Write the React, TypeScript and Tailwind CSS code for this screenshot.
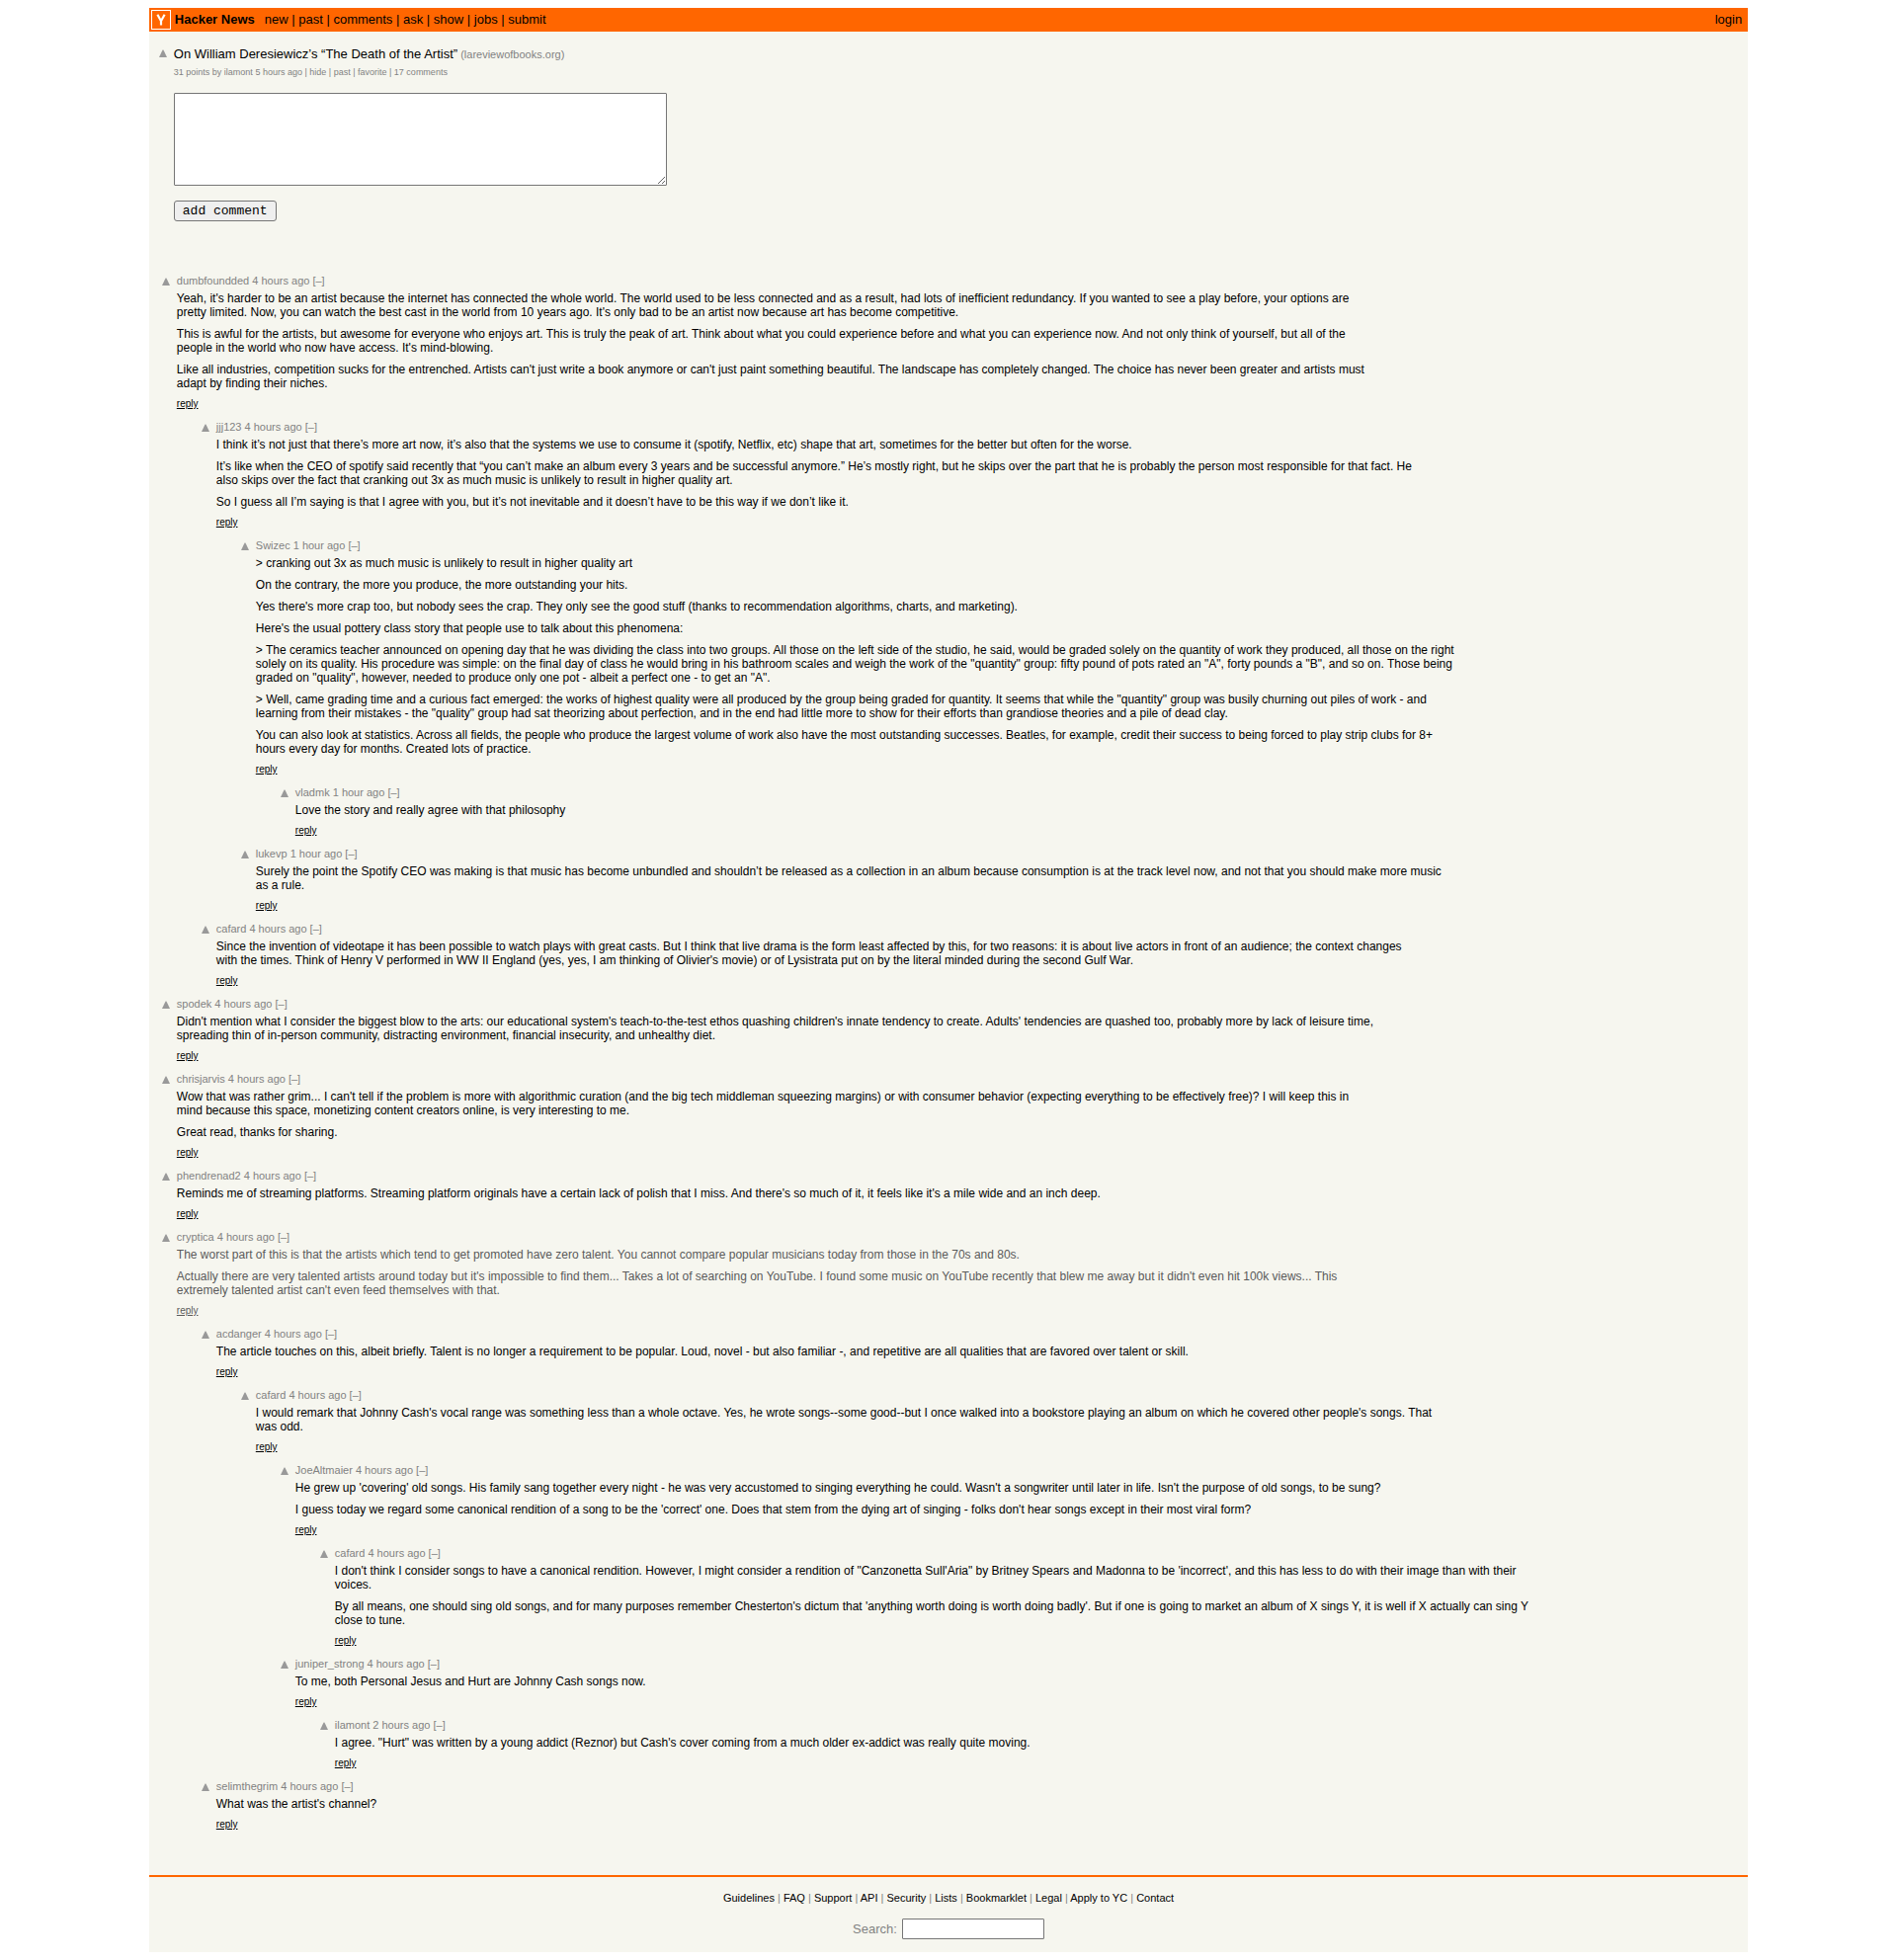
import React from "react";

type CommentData = {
  user: string;
  age: string;
  paragraphs: string[];
  faded?: boolean;
  replies?: CommentData[];
};

const navLinks = ["new", "past", "comments", "ask", "show", "jobs", "submit"];

const storyLinks = ["hide", "past", "favorite", "17 comments"];

const footerLinks = [
  "Guidelines",
  "FAQ",
  "Support",
  "API",
  "Security",
  "Lists",
  "Bookmarklet",
  "Legal",
  "Apply to YC",
  "Contact",
];

const comments: CommentData[] = [
  {
    user: "dumbfoundded",
    age: "4 hours ago",
    paragraphs: [
      "Yeah, it's harder to be an artist because the internet has connected the whole world. The world used to be less connected and as a result, had lots of inefficient redundancy. If you wanted to see a play before, your options are pretty limited. Now, you can watch the best cast in the world from 10 years ago. It's only bad to be an artist now because art has become competitive.",
      "This is awful for the artists, but awesome for everyone who enjoys art. This is truly the peak of art. Think about what you could experience before and what you can experience now. And not only think of yourself, but all of the people in the world who now have access. It's mind-blowing.",
      "Like all industries, competition sucks for the entrenched. Artists can't just write a book anymore or can't just paint something beautiful. The landscape has completely changed. The choice has never been greater and artists must adapt by finding their niches.",
    ],
    replies: [
      {
        user: "jjj123",
        age: "4 hours ago",
        paragraphs: [
          "I think it’s not just that there’s more art now, it’s also that the systems we use to consume it (spotify, Netflix, etc) shape that art, sometimes for the better but often for the worse.",
          "It’s like when the CEO of spotify said recently that “you can’t make an album every 3 years and be successful anymore.” He’s mostly right, but he skips over the part that he is probably the person most responsible for that fact. He also skips over the fact that cranking out 3x as much music is unlikely to result in higher quality art.",
          "So I guess all I’m saying is that I agree with you, but it’s not inevitable and it doesn’t have to be this way if we don’t like it.",
        ],
        replies: [
          {
            user: "Swizec",
            age: "1 hour ago",
            paragraphs: [
              "> cranking out 3x as much music is unlikely to result in higher quality art",
              "On the contrary, the more you produce, the more outstanding your hits.",
              "Yes there's more crap too, but nobody sees the crap. They only see the good stuff (thanks to recommendation algorithms, charts, and marketing).",
              "Here's the usual pottery class story that people use to talk about this phenomena:",
              "> The ceramics teacher announced on opening day that he was dividing the class into two groups. All those on the left side of the studio, he said, would be graded solely on the quantity of work they produced, all those on the right solely on its quality. His procedure was simple: on the final day of class he would bring in his bathroom scales and weigh the work of the \"quantity\" group: fifty pound of pots rated an \"A\", forty pounds a \"B\", and so on. Those being graded on \"quality\", however, needed to produce only one pot - albeit a perfect one - to get an \"A\".",
              "> Well, came grading time and a curious fact emerged: the works of highest quality were all produced by the group being graded for quantity. It seems that while the \"quantity\" group was busily churning out piles of work - and learning from their mistakes - the \"quality\" group had sat theorizing about perfection, and in the end had little more to show for their efforts than grandiose theories and a pile of dead clay.",
              "You can also look at statistics. Across all fields, the people who produce the largest volume of work also have the most outstanding successes. Beatles, for example, credit their success to being forced to play strip clubs for 8+ hours every day for months. Created lots of practice.",
            ],
            replies: [
              {
                user: "vladmk",
                age: "1 hour ago",
                paragraphs: ["Love the story and really agree with that philosophy"],
              },
            ],
          },
          {
            user: "lukevp",
            age: "1 hour ago",
            paragraphs: [
              "Surely the point the Spotify CEO was making is that music has become unbundled and shouldn’t be released as a collection in an album because consumption is at the track level now, and not that you should make more music as a rule.",
            ],
          },
        ],
      },
      {
        user: "cafard",
        age: "4 hours ago",
        paragraphs: [
          "Since the invention of videotape it has been possible to watch plays with great casts. But I think that live drama is the form least affected by this, for two reasons: it is about live actors in front of an audience; the context changes with the times. Think of Henry V performed in WW II England (yes, yes, I am thinking of Olivier's movie) or of Lysistrata put on by the literal minded during the second Gulf War.",
        ],
      },
    ],
  },
  {
    user: "spodek",
    age: "4 hours ago",
    paragraphs: [
      "Didn't mention what I consider the biggest blow to the arts: our educational system's teach-to-the-test ethos quashing children's innate tendency to create. Adults' tendencies are quashed too, probably more by lack of leisure time, spreading thin of in-person community, distracting environment, financial insecurity, and unhealthy diet.",
    ],
  },
  {
    user: "chrisjarvis",
    age: "4 hours ago",
    paragraphs: [
      "Wow that was rather grim... I can't tell if the problem is more with algorithmic curation (and the big tech middleman squeezing margins) or with consumer behavior (expecting everything to be effectively free)? I will keep this in mind because this space, monetizing content creators online, is very interesting to me.",
      "Great read, thanks for sharing.",
    ],
  },
  {
    user: "phendrenad2",
    age: "4 hours ago",
    paragraphs: [
      "Reminds me of streaming platforms. Streaming platform originals have a certain lack of polish that I miss. And there's so much of it, it feels like it's a mile wide and an inch deep.",
    ],
  },
  {
    user: "cryptica",
    age: "4 hours ago",
    faded: true,
    paragraphs: [
      "The worst part of this is that the artists which tend to get promoted have zero talent. You cannot compare popular musicians today from those in the 70s and 80s.",
      "Actually there are very talented artists around today but it's impossible to find them... Takes a lot of searching on YouTube. I found some music on YouTube recently that blew me away but it didn't even hit 100k views... This extremely talented artist can't even feed themselves with that.",
    ],
    replies: [
      {
        user: "acdanger",
        age: "4 hours ago",
        paragraphs: [
          "The article touches on this, albeit briefly. Talent is no longer a requirement to be popular. Loud, novel - but also familiar -, and repetitive are all qualities that are favored over talent or skill.",
        ],
        replies: [
          {
            user: "cafard",
            age: "4 hours ago",
            paragraphs: [
              "I would remark that Johnny Cash's vocal range was something less than a whole octave. Yes, he wrote songs--some good--but I once walked into a bookstore playing an album on which he covered other people's songs. That was odd.",
            ],
            replies: [
              {
                user: "JoeAltmaier",
                age: "4 hours ago",
                paragraphs: [
                  "He grew up 'covering' old songs. His family sang together every night - he was very accustomed to singing everything he could. Wasn't a songwriter until later in life. Isn't the purpose of old songs, to be sung?",
                  "I guess today we regard some canonical rendition of a song to be the 'correct' one. Does that stem from the dying art of singing - folks don't hear songs except in their most viral form?",
                ],
                replies: [
                  {
                    user: "cafard",
                    age: "4 hours ago",
                    paragraphs: [
                      "I don't think I consider songs to have a canonical rendition. However, I might consider a rendition of \"Canzonetta Sull'Aria\" by Britney Spears and Madonna to be 'incorrect', and this has less to do with their image than with their voices.",
                      "By all means, one should sing old songs, and for many purposes remember Chesterton's dictum that 'anything worth doing is worth doing badly'. But if one is going to market an album of X sings Y, it is well if X actually can sing Y close to tune.",
                    ],
                  },
                ],
              },
              {
                user: "juniper_strong",
                age: "4 hours ago",
                paragraphs: ["To me, both Personal Jesus and Hurt are Johnny Cash songs now."],
                replies: [
                  {
                    user: "ilamont",
                    age: "2 hours ago",
                    paragraphs: [
                      "I agree. \"Hurt\" was written by a young addict (Reznor) but Cash's cover coming from a much older ex-addict was really quite moving.",
                    ],
                  },
                ],
              },
            ],
          },
        ],
      },
      {
        user: "selimthegrim",
        age: "4 hours ago",
        paragraphs: ["What was the artist's channel?"],
      },
    ],
  },
];

function Upvote() {
  return (
    <button type="button" aria-label="upvote" className="block size-2">
      <svg viewBox="0 0 8 8" className="block size-2" aria-hidden="true">
        <path d="M3.6 0.4H4.4L8 8H0Z" fill="#999999" />
      </svg>
    </button>
  );
}

function Piped({ items }: { items: string[] }) {
  return (
    <>
      {items.map((item, i) => (
        <React.Fragment key={item}>
          {i > 0 && " | "}
          <a href="#">{item}</a>
        </React.Fragment>
      ))}
    </>
  );
}

function Comment({ data }: { data: CommentData }) {
  return (
    <li>
      <article className="flex gap-[7px] pb-[10px]">
        <div className="pt-1">
          <Upvote />
        </div>
        <div className="min-w-0 flex-1">
          <div className="mb-1 text-[11px] leading-[14px] text-[#828282]">
            <a href="#">{data.user}</a> <a href="#">{data.age}</a>{" "}
            <button type="button">[–]</button>
          </div>
          <div
            className={
              data.faded
                ? "flex max-w-[1215px] flex-col gap-2 text-[12px] leading-[14px] text-[#5a5a5a]"
                : "flex max-w-[1215px] flex-col gap-2 text-[12px] leading-[14px] text-black"
            }
          >
            {data.paragraphs.map((p) => (
              <p key={p}>{p}</p>
            ))}
            <p className="text-[10px] leading-[12px]">
              <a href="#" className="underline">
                reply
              </a>
            </p>
          </div>
        </div>
      </article>
      {data.replies && <CommentList items={data.replies} nested />}
    </li>
  );
}

function CommentList({ items, nested }: { items: CommentData[]; nested?: boolean }) {
  return (
    <ul className={nested ? "pl-10" : ""}>
      {items.map((c) => (
        <Comment key={c.user + c.age} data={c} />
      ))}
    </ul>
  );
}

export default function App() {
  return (
    <div className="bg-white p-2 font-['Liberation_Sans',Arial,sans-serif] text-[13px] leading-4 text-[#828282]">
      <div className="mx-auto w-[85%] bg-[#f6f6ef]">
        <header className="flex items-center bg-[#ff6600] p-[2px] text-black">
          <a href="#" aria-label="Home" className="mr-1">
            <svg viewBox="0 0 20 20" className="block size-5" aria-hidden="true">
              <rect x="0.5" y="0.5" width="19" height="19" fill="#ff6600" stroke="#ffffff" />
              <path d="M6.4 4.8 10 11.2 13.6 4.8M10 10.6V15.4" fill="none" stroke="#ffffff" strokeWidth="2.2" />
            </svg>
          </a>
          <a href="#" className="mr-[10px] font-bold">
            Hacker News
          </a>
          <nav className="flex-1">
            <Piped items={navLinks} />
          </nav>
          <a href="#" className="mr-1">
            login
          </a>
        </header>

        <main>
          <section className="flex gap-[7px] pt-[15px] pl-[10px]">
            <div className="pt-[3px]">
              <Upvote />
            </div>
            <div className="min-w-0 flex-1">
              <h1>
                <a href="#" className="text-black">
                  On William Deresiewicz’s “The Death of the Artist”
                </a>
                <span className="text-[11px]">
                  {" "}
                  (<a href="#">lareviewofbooks.org</a>)
                </span>
              </h1>
              <p className="mt-1 text-[9px] leading-[12px]">
                31 points by <a href="#">ilamont</a> <a href="#">5 hours ago</a> |{" "}
                <Piped items={storyLinks} />
              </p>
              <form className="mt-[15px]" onSubmit={(e) => e.preventDefault()}>
                <textarea
                  aria-label="Comment text"
                  className="block h-[94px] w-[499px] max-w-full rounded-[1px] border border-[#767676] bg-white p-[2px] font-['Liberation_Mono',monospace] text-black"
                />
                <button
                  type="submit"
                  className="mt-[15px] block h-[21px] rounded-[3px] border border-[#767676] bg-[#efefef] px-2 font-['Liberation_Mono',monospace] leading-4 text-black"
                >
                  add comment
                </button>
              </form>
            </div>
          </section>

          <section aria-label="Comments" className="pt-[53px] pb-[35px] pl-[13px]">
            <CommentList items={comments} />
          </section>
        </main>

        <footer className="border-t-2 border-[#ff6600] pt-[14px] pb-[13px] text-center">
          <nav className="text-[11px] leading-[14px]">
            {footerLinks.map((item, i) => (
              <React.Fragment key={item}>
                {i > 0 && " | "}
                <a href="#" className="text-black">
                  {item}
                </a>
              </React.Fragment>
            ))}
          </nav>
          <form className="mt-[14px] flex items-center justify-center gap-[5px]" onSubmit={(e) => e.preventDefault()}>
            <label htmlFor="site-search">Search:</label>
            <input
              id="site-search"
              type="text"
              className="h-[21px] w-36 rounded-[1px] border border-[#767676] bg-white px-[2px] font-['Liberation_Mono',monospace] text-black"
            />
          </form>
        </footer>
      </div>
    </div>
  );
}
